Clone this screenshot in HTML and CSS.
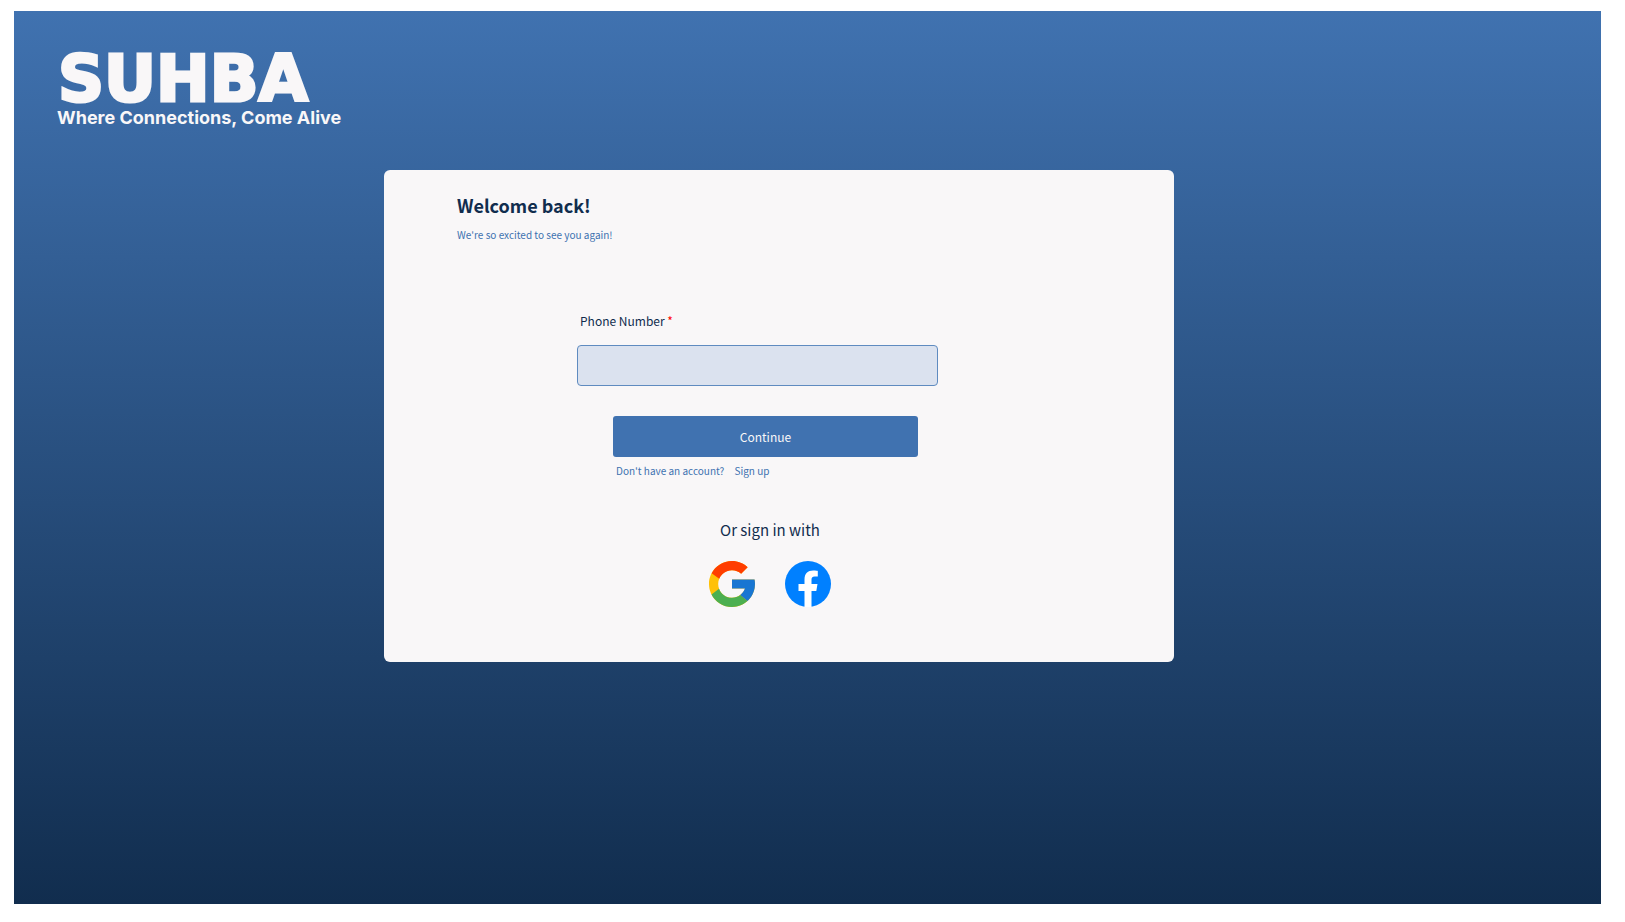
FILE: index.html
```html
<!DOCTYPE html>
<html lang="en">
<head>
<meta charset="utf-8">
<meta name="viewport" content="width=device-width, initial-scale=1">
<title>Suhba – Sign in</title>
<link rel="stylesheet" href="styles.css">
</head>
<body>
<div class="page">
  <header class="brand">
    <div class="brand-name">SUHBA</div>
    <p class="brand-tagline">Where Connections, Come Alive</p>
  </header>
  <main class="card">
    <h1 class="card-title">Welcome back!</h1>
    <p class="card-subtitle">We're so excited to see you again!</p>
    <form class="login">
      <label class="field-label" for="phone">Phone Number <span class="required">*</span></label>
      <input class="field-input" id="phone" type="tel" required>
      <div class="actions">
        <button class="submit" type="submit">Continue</button>
        <p class="signup">Don't have an account? <a class="signup-link" href="#">Sign up</a></p>
      </div>
    </form>
    <section class="social">
      <h2 class="social-title">Or sign in with</h2>
      <div class="social-list">
        <button class="social-button" type="button" aria-label="Google">
          <svg class="social-icon" viewBox="4 4 40 40">
            <path fill="#FFC107" d="M43.611 20.083H42V20H24v8h11.303c-1.649 4.657-6.08 8-11.303 8-6.627 0-12-5.373-12-12s5.373-12 12-12c3.059 0 5.842 1.154 7.961 3.039l5.657-5.657C34.046 6.053 29.268 4 24 4 12.955 4 4 12.955 4 24s8.955 20 20 20 20-8.955 20-20c0-1.341-.138-2.65-.389-3.917z"/>
            <path fill="#FF3D00" d="M6.306 14.691l6.571 4.819C14.655 15.108 18.961 12 24 12c3.059 0 5.842 1.154 7.961 3.039l5.657-5.657C34.046 6.053 29.268 4 24 4 16.318 4 9.656 8.337 6.306 14.691z"/>
            <path fill="#4CAF50" d="M24 44c5.166 0 9.86-1.977 13.409-5.192l-6.19-5.238C29.211 35.091 26.715 36 24 36c-5.202 0-9.619-3.317-11.283-7.946l-6.522 5.025C9.505 39.556 16.227 44 24 44z"/>
            <path fill="#1976D2" d="M43.611 20.083H42V20H24v8h11.303c-.792 2.237-2.231 4.166-4.087 5.571l6.193 5.238C36.971 39.205 44 34 44 24c0-1.341-.138-2.65-.389-3.917z"/>
          </svg>
        </button>
        <button class="social-button" type="button" aria-label="Facebook">
          <svg class="social-icon" viewBox="0 0 46 46">
            <circle cx="23" cy="23" r="23" fill="#0080FF"/>
            <path fill="#fff" d="M19.5 46V30H13.5V23H19.5V18.500C19.500 12.500 22.800 9.500 28.200 9.500C30.500 9.500 32.800 9.900 32.800 9.900V15.500H29.800C27 15.500 26.500 17 26.500 18.800V23H32.500L31.300 30H26.500V46Z"/>
          </svg>
        </button>
      </div>
    </section>
  </main>
</div>
</body>
</html>
```
FILE: styles.css
```css
* {
  box-sizing: border-box;
}

body {
  margin: 0;
  min-height: 100vh;
  display: flex;
  padding: 11px 24px 18px 14px;
  background: #fff;
  color: #112d4e;
  font-family: "Noto Sans CJK SC", "Noto Sans", sans-serif;
}

h1,
h2,
p {
  margin: 0;
}

.page {
  flex: 1;
  padding: 44px 100px 44px 43px;
  background: linear-gradient(#4072b0, #112d4e);
}

.brand {
  color: #f9f7f8;
}

.brand-name {
  padding: 0 0 3px 1px;
  font: bold 64px/48px "DejaVu Sans", sans-serif;
  -webkit-text-stroke: 3px #f9f7f8;
}

.brand-tagline {
  font: 700 18px/24px Inter, sans-serif;
}

.card {
  width: 100%;
  max-width: 790px;
  margin: 40px auto 0;
  padding: 21px 73px 55px;
  border-radius: 6px;
  background: #f9f7f8;
}

.card-title {
  font-size: 18px;
  font-weight: 700;
  line-height: 28px;
}

.card-subtitle {
  margin-top: 6px;
  color: #4072b0;
  font-size: 10px;
  line-height: 20px;
}

.login {
  max-width: 361px;
  margin: 66px 0 0 120px;
}

.field-label {
  display: block;
  padding-left: 3px;
  font-size: 12px;
  line-height: 20px;
}

.required {
  color: #f00;
}

.field-input {
  display: block;
  width: 100%;
  height: 41px;
  margin-top: 14px;
  padding: 0 12px;
  border: 1px solid #5f8bc0;
  border-radius: 4px;
  background: #dbe2ef;
  color: inherit;
  font: inherit;
}

.actions {
  margin: 30px 20px 0 36px;
}

.submit {
  display: block;
  width: 100%;
  height: 41px;
  padding: 0;
  border: 0;
  border-radius: 3px;
  background: #4072b0;
  color: #f9f7f8;
  font: 12px/20px "Noto Sans CJK SC", "Noto Sans", sans-serif;
}

.signup {
  padding: 4px 0 0 3px;
  color: #4072b0;
  font-size: 10px;
  line-height: 20px;
}

.signup-link {
  margin-left: 8px;
  color: inherit;
  text-decoration: none;
}

.social {
  display: flex;
  flex-direction: column;
  align-items: center;
  margin-right: 18px;
  padding-top: 37px;
}

.social-title {
  font-size: 15px;
  font-weight: 400;
  line-height: 24px;
}

.social-list {
  display: flex;
  gap: 30px;
  margin-top: 19px;
}

.social-button {
  padding: 0;
  border: 0;
  background: none;
}

.social-icon {
  display: block;
  width: 46px;
  height: 46px;
}
```
